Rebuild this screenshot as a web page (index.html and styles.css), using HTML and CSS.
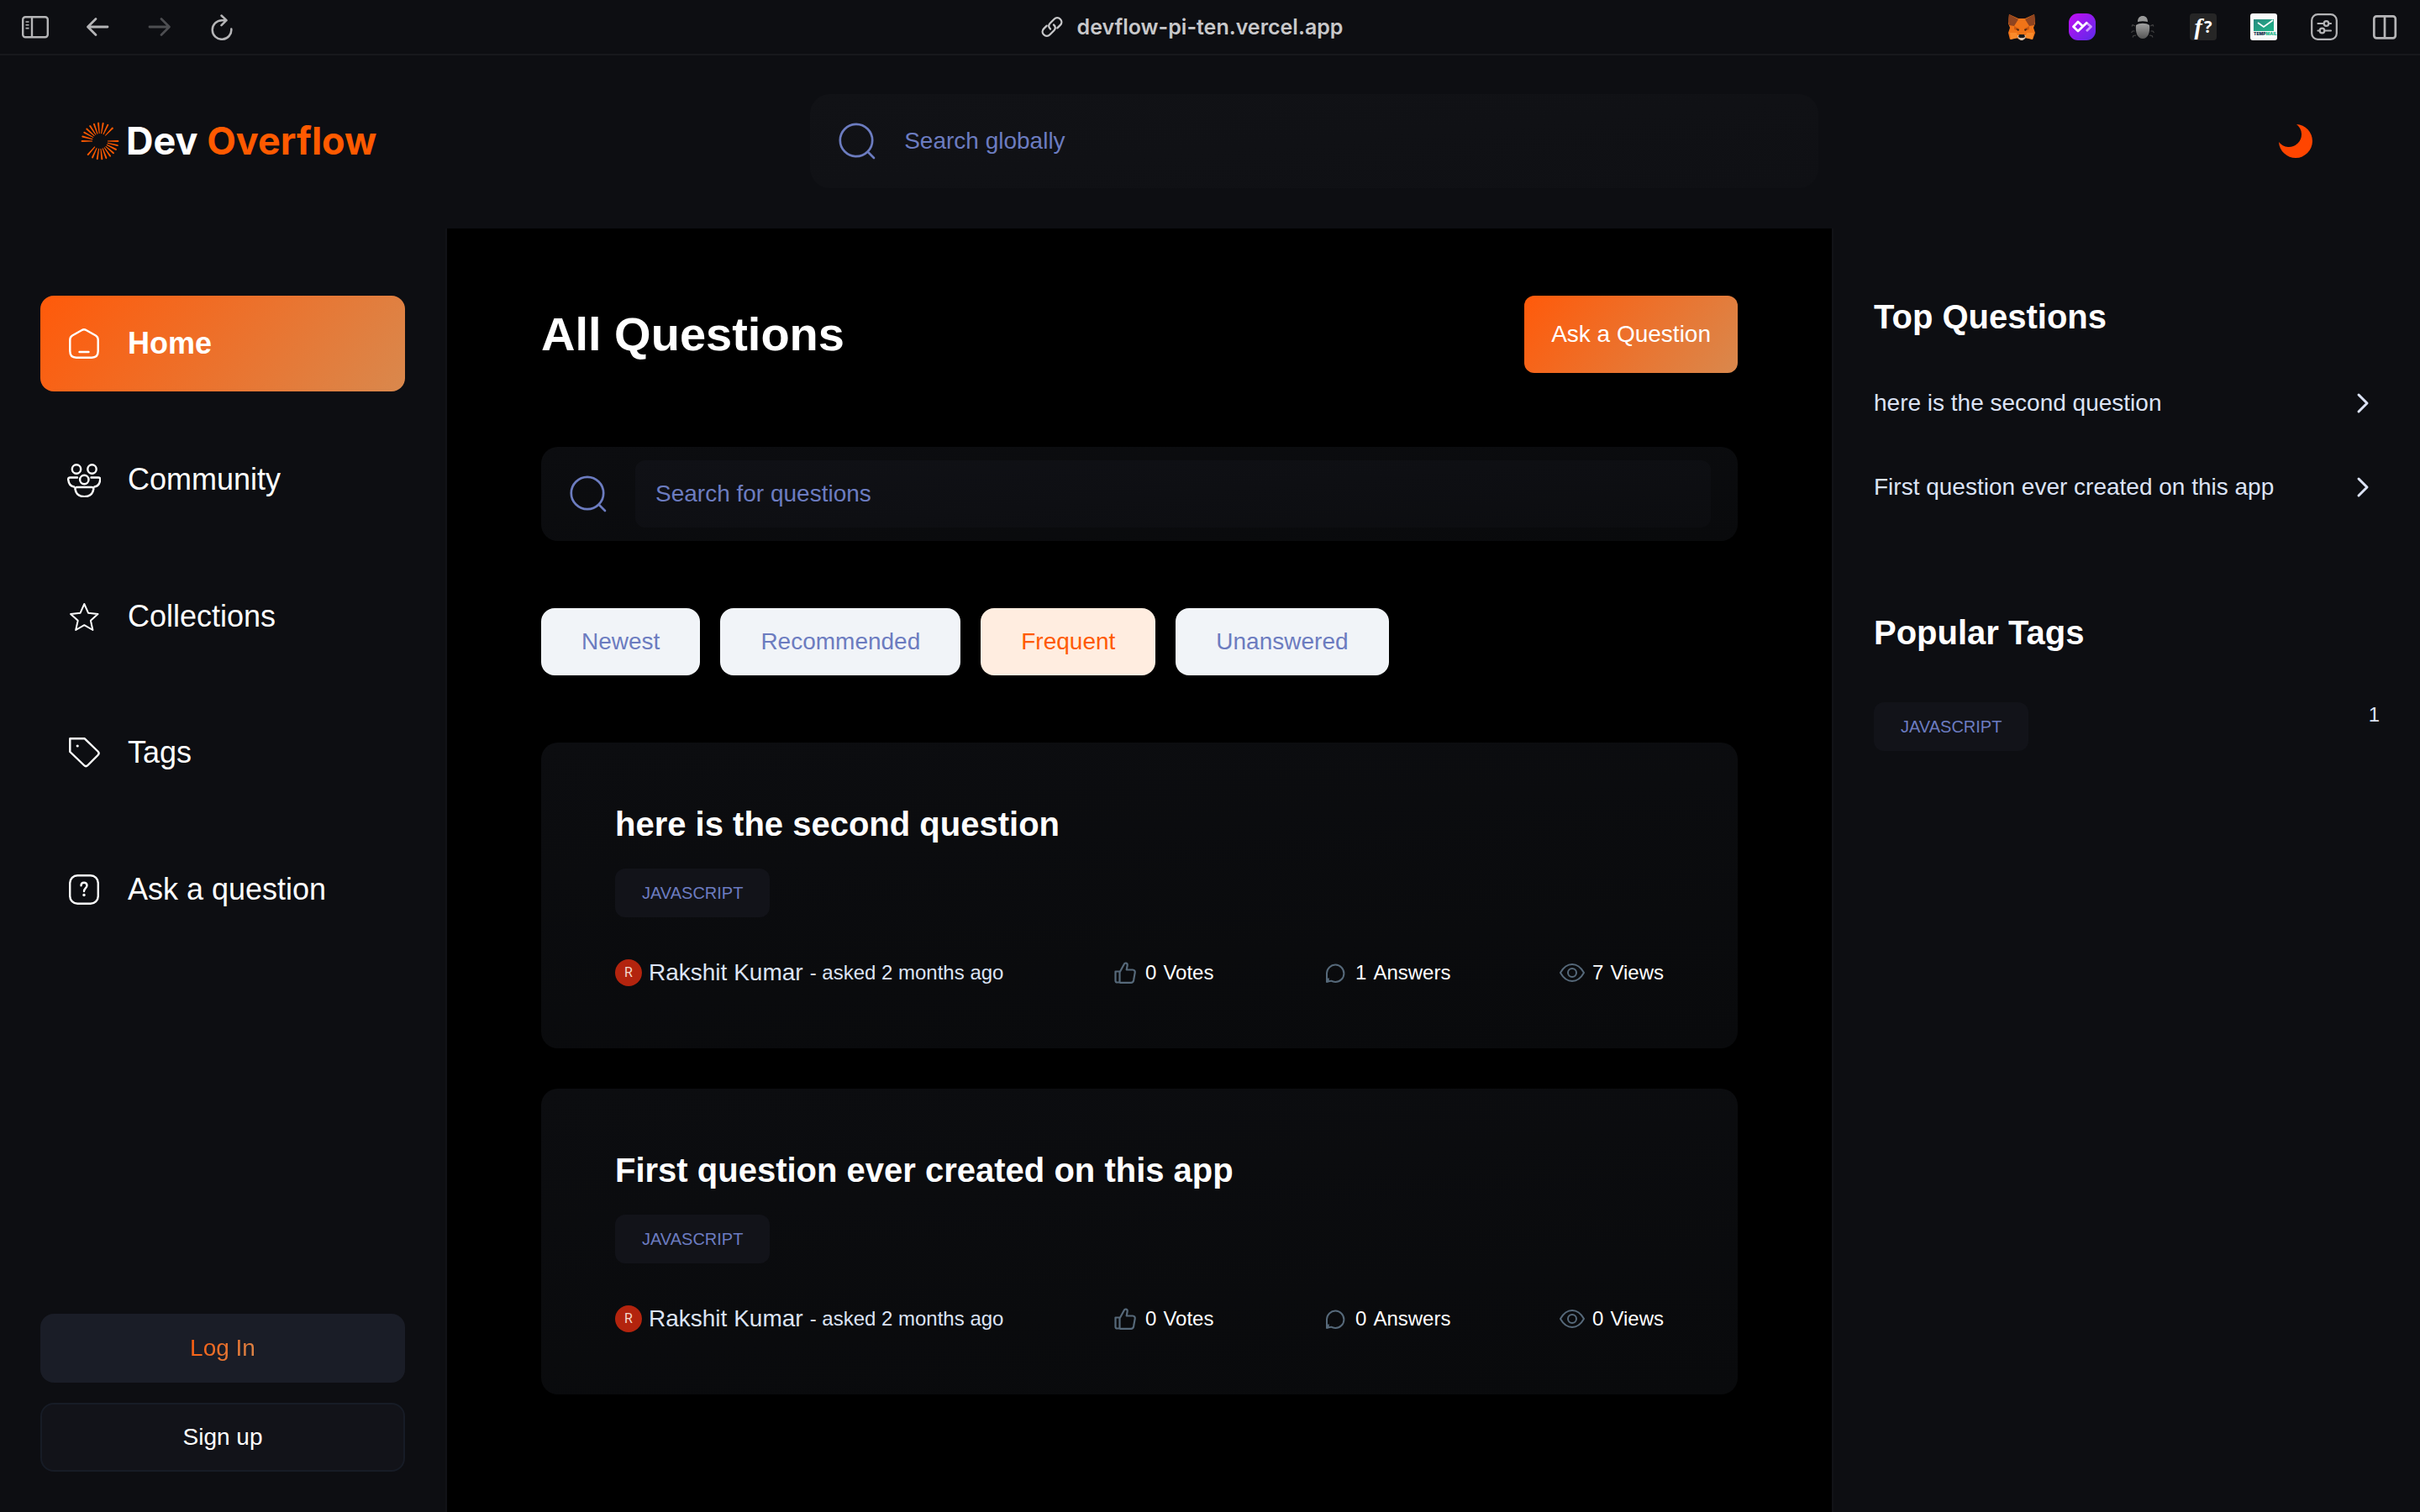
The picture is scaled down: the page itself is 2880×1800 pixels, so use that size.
FILE: index.html
```html
<!DOCTYPE html>
<html lang="en">
<head>
<meta charset="utf-8">
<meta name="viewport" content="width=device-width, initial-scale=1">
<title>Dev Overflow</title>
<link rel="stylesheet" href="styles.css">
</head>
<body>
<svg class="defs" aria-hidden="true">
  <defs>
    <linearGradient id="g-violet" x1="0" y1="0" x2="1" y2="1"><stop offset="0" stop-color="#c40df5"/><stop offset="1" stop-color="#5a2be8"/></linearGradient>
    <linearGradient id="g-bug" x1="0" y1="0" x2="0" y2="1"><stop offset="0" stop-color="#a2a2a2"/><stop offset="1" stop-color="#555"/></linearGradient>
    <linearGradient id="g-mail" x1="0" y1="0" x2="1" y2="1"><stop offset="0" stop-color="#2a8a80"/><stop offset="1" stop-color="#1fb488"/></linearGradient>
    <path id="ray" d="M9 -.5 L21.500 -1.100 Q23.500 0 21.500 .9 L9 .5Z"/>
  </defs>
  <symbol id="i-search" viewBox="0 0 48 48"><g fill="none" stroke="currentColor" stroke-width="2.700" stroke-linecap="round"><circle cx="23" cy="23" r="19.200"/><path d="M37 37l7 7"/></g></symbol>
  <symbol id="i-like" viewBox="0 0 32 32"><path d="M4.500 14.500h5v13h-3a2 2 0 0 1-2-2v-11zM9.500 15.500l5.500-10c.6-1.500 4-1.500 3.700 1.500L17.700 12.500h7.300c2.200 0 3 1.700 2.700 3.400l-1.600 9c-.4 1.900-1.400 2.900-3 2.900H9.500" fill="none" stroke="currentColor" stroke-width="2.200" stroke-linejoin="round"/></symbol>
  <symbol id="i-message" viewBox="0 0 32 32"><path d="M6 27V16.500A10.200 10.200 0 1 1 16.200 27c-2 0-3.500-.4-5-1.300C9.500 25.500 7.500 27 6 27zM6 27c1.500-1 2-3 1.700-4.500" fill="none" stroke="currentColor" stroke-width="2" stroke-linejoin="round"/></symbol>
  <symbol id="i-eye" viewBox="0 0 32 32"><g fill="none" stroke="currentColor" stroke-width="2"><path d="M2 16c3.500-6.300 8.300-10 14-10s10.500 3.700 14 10c-3.500 6.300-8.300 10-14 10S5.500 22.300 2 16z" stroke-linejoin="round"/><circle cx="16" cy="16" r="5"/></g></symbol>
  <symbol id="i-chevron" viewBox="0 0 40 40"><path d="M15 30l10-10-10-10" fill="none" stroke="currentColor" stroke-width="3" stroke-linecap="round" stroke-linejoin="round"/></symbol>
</svg>

<div class="toolbar">
  <div class="toolbar-group toolbar-left">
    <button class="tool" aria-label="Show sidebar"><svg viewBox="0 0 32 32"><g fill="none" stroke="currentColor" stroke-width="2.400"><rect x="1.200" y="4.200" width="29.600" height="24" rx="3"/><path d="M12 4v24"/></g><path d="M4.500 10h4M4.500 13.800h4M4.500 17.600h4" stroke="currentColor" stroke-width="1.600"/></svg></button>
    <button class="tool" aria-label="Back"><svg viewBox="0 0 32 32"><path d="M28 16H5M14 6.500L4.500 16l9.500 9.500" fill="none" stroke="currentColor" stroke-width="2.800" stroke-linecap="round" stroke-linejoin="round"/></svg></button>
    <button class="tool tool-disabled" aria-label="Forward" disabled><svg viewBox="0 0 32 32"><path d="M4 16h23M18 6.500l9.500 9.500-9.500 9.500" fill="none" stroke="currentColor" stroke-width="2.800" stroke-linecap="round" stroke-linejoin="round"/></svg></button>
    <button class="tool" aria-label="Reload"><svg viewBox="0 0 32 32"><path d="M27.300 18.500A11.300 11.300 0 1 1 16 8.200h5.500M15.500 2.500l6 5.700-6 6" fill="none" stroke="currentColor" stroke-width="2.500" stroke-linecap="round" stroke-linejoin="round"/></svg></button>
  </div>
  <div class="address">
    <svg class="icon-link" viewBox="0 0 28 28"><g fill="none" stroke="currentColor" stroke-width="2.300" stroke-linecap="round"><path d="M12 16.500c-2.500-2-2.300-4.800-.4-6.800l5-5c2.100-2.100 5.100-2.100 7.200 0s2.100 5.100 0 7.200l-3.500 3.500"/><path d="M16 11.500c2.500 2 2.300 4.800.4 6.800l-5 5c-2.100 2.100-5.100 2.100-7.200 0s-2.100-5.100 0-7.200l3.500-3.500"/></g></svg>
    <span>devflow-pi-ten.vercel.app</span>
  </div>
  <div class="toolbar-group toolbar-right">
    <button class="tool" aria-label="Wallet"><svg viewBox="0 0 32 32"><path fill="#f07418" d="M1 1l11 5h8l11-5 1 11-2 5 2 6-3 8-8-2-4 2.500h-3L10 29l-8 2-2-8 2-6-2-5z"/><path fill="#8f4420" d="M1 1l11 6-5 8-6-1L0 9zM31 1L20 7l5 8 6-1 1-5z"/><path fill="#fa8a2a" d="M2 23h8l2 6-9 2zM30 23h-8l-2 6 9 2z"/><path fill="#cf5a10" d="M7 15l6 3-1 3-5-2zM25 15l-6 3 1 3 5-2z"/><path fill="#3b2414" d="M9 18l4 1-1 2zM23 18l-4 1 1 2z"/><path fill="#d9c3b0" d="M11 26h10l-1 4-3 2h-2l-3-2z"/><path fill="#1b1b1b" d="M13 25h6l1 3-2 1h-4l-2-1z"/></svg></button>
    <button class="tool" aria-label="Code extension"><svg viewBox="0 0 32 32"><rect width="32" height="32" rx="11" fill="url(#g-violet)"/><g fill="none" stroke-width="2.800" stroke-linejoin="round"><path d="M21 11l5.500 4.800L21 21" stroke="#cf9bff"/><path d="M17 15.500l-6-5.500-5.500 5.800L11 21 22 10.500" stroke="#fff"/></g></svg></button>
    <button class="tool" aria-label="Bug tracker"><svg viewBox="0 0 32 32"><path d="M10 10c0-4.500 2.500-7 6-7s6 2.500 6 7c-4-1-8-1-12 0z" fill="#999"/><path d="M8 14c4-3 12-3 16 0 1 9-2 16-8 16S7 23 8 14z" fill="url(#g-bug)"/><path d="M7 15l-3-1.500-1 2M6.500 21H4l-1.500 2M8 26l-3 .5-1 2M25 15l3-1.500 1 2M25.500 21H28l1.500 2M24 26l3 .5 1 2" fill="none" stroke="#444" stroke-width="1.200"/></svg></button>
    <button class="tool tool-fn" aria-label="What font"><i>f</i><span>?</span></button>
    <button class="tool" aria-label="Temp mail"><svg viewBox="0 0 32 32"><rect width="32" height="32" rx="3" fill="#fafafa"/><rect x="4" y="7" width="24" height="14" fill="url(#g-mail)"/><path d="M9 11l7 5 11-8" fill="none" stroke="#fff" stroke-width="1.800"/><text x="4" y="26" font-family="Inter, sans-serif" font-size="5" font-weight="900" fill="#12324d">TEMP<tspan fill="#1fb488">MAIL</tspan></text></svg></button>
    <button class="tool" aria-label="Page settings"><svg viewBox="0 0 32 32"><g fill="none" stroke="currentColor" stroke-width="2.200" stroke-linecap="round"><rect x="1.200" y="1.200" width="29.600" height="29.600" rx="7"/><path d="M8.500 12h7M21.500 12h2.500M8.500 20.500h2M16.500 20.500h7.500"/><circle cx="18.500" cy="12" r="2.800"/><circle cx="13.500" cy="20.500" r="2.800"/></g></svg></button>
    <button class="tool" aria-label="Split view"><svg viewBox="0 0 32 32"><g fill="none" stroke="currentColor" stroke-width="2.700"><rect x="3.300" y="3.300" width="25.500" height="26" rx="3"/><path d="M16 3v26"/></g></svg></button>
  </div>
</div>

<header class="navbar">
  <a class="brand" href="#">
    <svg class="brand-mark" viewBox="-23 -23 46 46" fill="#ff5a00">
      <use href="#ray" transform="rotate(180)"/><use href="#ray" transform="rotate(195)"/><use href="#ray" transform="rotate(209)"/><use href="#ray" transform="rotate(223)"/><use href="#ray" transform="rotate(237)"/><use href="#ray" transform="rotate(251)"/><use href="#ray" transform="rotate(265)"/><use href="#ray" transform="rotate(280)"/><use href="#ray" transform="rotate(296)"/><use href="#ray" transform="rotate(314)"/>
      <use href="#ray"/><use href="#ray" transform="rotate(14)"/><use href="#ray" transform="rotate(28)"/><use href="#ray" transform="rotate(42)"/><use href="#ray" transform="rotate(56)"/><use href="#ray" transform="rotate(70)"/><use href="#ray" transform="rotate(84)"/><use href="#ray" transform="rotate(99)"/><use href="#ray" transform="rotate(115)"/><use href="#ray" transform="rotate(132)"/>
    </svg>
    <span>Dev <span class="brand-accent">Overflow</span></span>
  </a>
  <label class="search search-global">
    <svg class="icon-search"><use href="#i-search"/></svg>
    <input type="text" placeholder="Search globally" aria-label="Search globally">
  </label>
  <button class="theme-toggle" aria-label="Toggle theme"><svg class="icon" viewBox="0 0 40 40"><path d="M21 0A20 20 0 1 1 0 21A15 15 0 1 0 21 0z" fill="#ff4500"/></svg></button>
</header>

<div class="layout">
  <aside class="sidebar">
    <nav class="menu" aria-label="Main">
      <a class="menu-item menu-item-active" href="#"><svg class="icon" viewBox="0 0 40 40"><g fill="none" stroke="currentColor" stroke-width="2.400" stroke-linecap="round" stroke-linejoin="round"><path d="M17.500 4L6 10.500c-1.800 1.200-2.700 2.700-2.700 5V29c0 5 3 7.700 7.500 7.700h18.400c4.500 0 7.500-2.700 7.500-7.700V15.500c0-2.300-.9-3.800-2.700-5L22.500 4c-1.800-1-3.200-1-5 0z"/><path d="M14.500 30h11"/></g></svg>Home</a>
      <a class="menu-item" href="#"><svg class="icon" viewBox="0 0 40 40"><g fill="none" stroke="currentColor" stroke-width="2.400" stroke-linecap="round" stroke-linejoin="round"><circle cx="11" cy="6.500" r="5.200"/><circle cx="29.500" cy="6.500" r="5.200"/><circle cx="20.300" cy="19" r="5.200"/><path d="M12 16.500H3.500C1.700 16.500 1 17.300 1.200 19c.6 5 3 8 6.800 8.500M28.500 16.500h8.500c1.800 0 2.500.8 2.300 2.500-.6 5-3 8-6.800 8.500M12 28h16.800c2 0 2.800 1 2.500 2.500-1 5.500-5 8.700-10.900 8.700s-9.900-3.200-10.900-8.700C9.200 29 10 28 12 28z"/></g></svg>Community</a>
      <a class="menu-item" href="#"><svg class="icon" viewBox="0 0 40 40"><path d="M20.300 5l4.700 10.700 11.500 1.200-8.600 7.800 2.500 11.300-10.100-5.800L10.200 36l2.500-11.300-8.600-7.800 11.500-1.200z" fill="none" stroke="currentColor" stroke-width="2" stroke-linejoin="round"/></svg>Collections</a>
      <a class="menu-item" href="#"><svg class="icon" viewBox="0 0 40 40"><path d="M3.300 3.300h17.500L36.500 18.500c1.500 1.500 1.500 3 0 4.500l-12 12c-1.500 1.500-3 1.500-4.500 0L3.300 19z" fill="none" stroke="currentColor" stroke-width="2.400" stroke-linejoin="round"/><circle cx="12.200" cy="12" r="1.600" fill="currentColor"/></svg>Tags</a>
      <a class="menu-item" href="#"><svg class="icon" viewBox="0 0 40 40"><g fill="none" stroke="currentColor" stroke-width="2.400" stroke-linecap="round"><rect x="3.200" y="3.200" width="33.600" height="33.600" rx="9"/><path d="M16.500 15.200c0-4.600 7-4.600 7-.2 0 3.300-3.400 3.500-3.500 7"/></g><circle cx="20" cy="26.500" r="1.700" fill="currentColor"/></svg>Ask a question</a>
    </nav>
    <div class="auth">
      <a class="auth-button auth-login" href="#"><span>Log In</span></a>
      <a class="auth-button auth-signup" href="#">Sign up</a>
    </div>
  </aside>

  <main class="content">
    <div class="page-head">
      <h1>All Questions</h1>
      <button class="ask">Ask a Question</button>
    </div>
    <label class="search search-local">
      <svg class="icon-search"><use href="#i-search"/></svg>
      <input type="text" placeholder="Search for questions" aria-label="Search for questions">
    </label>
    <div class="filters">
      <button class="filter">Newest</button>
      <button class="filter">Recommended</button>
      <button class="filter filter-active">Frequent</button>
      <button class="filter">Unanswered</button>
    </div>
    <div class="questions">
      <article class="card">
        <h2><a href="#">here is the second question</a></h2>
        <a class="tag" href="#">JAVASCRIPT</a>
        <div class="meta">
          <a class="author" href="#"><span class="avatar">R</span><span class="author-name">Rakshit Kumar</span><span class="asked">- asked 2 months ago</span></a>
          <span class="stat"><svg class="icon-stat"><use href="#i-like"/></svg><span>0</span><span>Votes</span></span>
          <span class="stat"><svg class="icon-stat"><use href="#i-message"/></svg><span>1</span><span>Answers</span></span>
          <span class="stat"><svg class="icon-stat"><use href="#i-eye"/></svg><span>7</span><span>Views</span></span>
        </div>
      </article>
      <article class="card">
        <h2><a href="#">First question ever created on this app</a></h2>
        <a class="tag" href="#">JAVASCRIPT</a>
        <div class="meta">
          <a class="author" href="#"><span class="avatar">R</span><span class="author-name">Rakshit Kumar</span><span class="asked">- asked 2 months ago</span></a>
          <span class="stat"><svg class="icon-stat"><use href="#i-like"/></svg><span>0</span><span>Votes</span></span>
          <span class="stat"><svg class="icon-stat"><use href="#i-message"/></svg><span>0</span><span>Answers</span></span>
          <span class="stat"><svg class="icon-stat"><use href="#i-eye"/></svg><span>0</span><span>Views</span></span>
        </div>
      </article>
    </div>
  </main>

  <aside class="panel">
    <section>
      <h2>Top Questions</h2>
      <div class="top-list">
        <a class="top-item" href="#">here is the second question<svg class="icon"><use href="#i-chevron"/></svg></a>
        <a class="top-item" href="#">First question ever created on this app<svg class="icon"><use href="#i-chevron"/></svg></a>
      </div>
    </section>
    <section>
      <h2>Popular Tags</h2>
      <a class="popular-tag" href="#"><span class="tag">JAVASCRIPT</span><span class="tag-count">1</span></a>
    </section>
  </aside>
</div>
</body>
</html>
```
FILE: styles.css
```css
:root {
  --bg: #0d0e12;
  --surface: #121319;
  --muted: #6c7cc0;
  --text: #ffffff;
  --soft: #dce3f5;
  --accent: #ff5a00;
  --accent-gradient: linear-gradient(129deg, #ff5a0a 0%, #d9884d 100%);
  --dark-gradient: linear-gradient(175deg, #0c0d10 0%, #090a0c 100%);
}

* { box-sizing: border-box; }

body {
  margin: 0;
  min-height: 100vh;
  display: flex;
  flex-direction: column;
  background: var(--bg);
  color: var(--text);
  font-family: "Liberation Sans", Arial, sans-serif;
  font-size: 28px;
}

a { color: inherit; text-decoration: none; }
h1, h2 { margin: 0; font-weight: 700; }
svg { display: block; flex: none; }
button, input { font: inherit; color: inherit; border: 0; padding: 0; background: none; }

.defs { position: absolute; width: 0; height: 0; }
.icon { width: 40px; height: 40px; }

/* browser toolbar */
.toolbar {
  display: grid;
  grid-template-columns: 1fr auto 1fr;
  align-items: center;
  height: 66px;
  padding: 0 26px;
  border-bottom: 2px solid #17181c;
  color: #b5b5b7;
}
.toolbar-group { display: flex; }
.toolbar-left { gap: 42px; }
.toolbar-right { gap: 40px; justify-content: flex-end; }
.tool { width: 32px; height: 32px; }
.tool svg { width: 32px; height: 32px; }
.tool-disabled { color: #4d4e51; }
.tool-fn {
  display: flex;
  align-items: center;
  justify-content: center;
  gap: 2px;
  border-radius: 4px;
  background: #262626;
  color: #fff;
  font: 700 28px/32px "Liberation Serif", serif;
}
.tool-fn span { font: 700 20px/32px "Open Sans", sans-serif; }
.address {
  display: flex;
  align-items: center;
  gap: 16px;
  padding-right: 44px;
  color: #c8c8ca;
  font: 600 25px/32px Inter, sans-serif;
}
.icon-link { width: 28px; height: 28px; }

/* site header */
.navbar {
  display: flex;
  align-items: center;
  justify-content: space-between;
  padding: 46px 96px 48px;
}
.brand {
  display: flex;
  align-items: center;
  gap: 8px;
  font: 700 45px/60px Inter, sans-serif;
  white-space: nowrap;
}
.brand-mark { width: 46px; height: 46px; }
.brand-accent { color: var(--accent); }
.theme-toggle { padding: 0 32px; }

.search {
  display: flex;
  align-items: center;
  height: 112px;
  padding: 0 32px;
}
.search input {
  flex: 1;
  min-width: 0;
  height: 80px;
  padding: 0 24px;
  border-radius: 12px;
  outline: 0;
}
.search input::placeholder { color: var(--muted); opacity: 1; }
.icon-search { width: 48px; height: 48px; color: var(--muted); }
.search-global {
  flex: 0 1 1200px;
  gap: 8px;
  border-radius: 24px;
  background: linear-gradient(175deg, #111216 0%, #0f1014 100%);
}
.search-local {
  gap: 32px;
  margin-top: 88px;
  border-radius: 20px;
  background: var(--dark-gradient);
}
.search-local input { background: linear-gradient(175deg, #101116 0%, #0c0d10 100%); }

/* page columns */
.layout {
  flex: 1;
  display: grid;
  grid-template-columns: 532px 1fr 700px;
}

.sidebar {
  display: flex;
  flex-direction: column;
  justify-content: space-between;
  padding: 80px 48px 48px;
  border-right: 2px solid #111217;
}
.menu { display: flex; flex-direction: column; gap: 48px; }
.menu-item {
  display: flex;
  align-items: center;
  gap: 32px;
  padding: 32px;
  border-radius: 16px;
  font-size: 36px;
  line-height: 1.4;
}
.menu-item-active { background: var(--accent-gradient); font-weight: 700; }
.auth { display: flex; flex-direction: column; gap: 24px; }
.auth-button {
  display: flex;
  align-items: center;
  justify-content: center;
  height: 82px;
  border-radius: 16px;
}
.auth-login { background: #1a1d27; }
.auth-login span {
  background: var(--accent-gradient);
  background-clip: text;
  color: transparent;
}
.auth-signup { background: var(--surface); border: 2px solid #171c26; }

/* question feed */
.content { padding: 80px 112px; background: #000; }
.page-head { display: flex; align-items: center; justify-content: space-between; }
h1 { font-size: 56px; line-height: 72px; }
.ask {
  height: 92px;
  padding: 0 32px;
  border-radius: 12px;
  background: var(--accent-gradient);
}
.filters { display: flex; gap: 24px; margin-top: 80px; }
.filter {
  height: 80px;
  padding: 0 48px;
  border-radius: 16px;
  background: #f1f4f8;
  color: var(--muted);
}
.filter-active { background: #ffede0; color: var(--accent); }
.questions { display: flex; flex-direction: column; gap: 48px; margin-top: 80px; }
.card {
  display: flex;
  flex-direction: column;
  align-items: flex-start;
  padding: 72px 88px;
  border-radius: 20px;
  background: var(--dark-gradient);
}
.card h2, .panel h2 { font-size: 40px; line-height: 50px; }
.tag {
  display: block;
  padding: 16px 32px;
  border-radius: 12px;
  background: var(--surface);
  color: var(--muted);
  font-size: 20px;
  line-height: 26px;
}
.card .tag { margin-top: 28px; }
.meta {
  align-self: stretch;
  display: flex;
  align-items: center;
  justify-content: space-between;
  height: 36px;
  margin-top: 48px;
  font-size: 24px;
}
.author, .stat { display: flex; align-items: center; gap: 8px; }
.author { color: var(--soft); }
.author-name { font-size: 28px; }
.avatar {
  width: 32px;
  height: 32px;
  border-radius: 50%;
  background: #b3240e;
  color: #f3d8cc;
  font: 400 16px/32px Roboto, sans-serif;
  text-align: center;
}
.icon-stat { width: 32px; height: 32px; color: #56697a; }

/* right column */
.panel {
  display: flex;
  flex-direction: column;
  gap: 128px;
  padding: 80px 48px;
  border-left: 2px solid #111217;
  color: var(--soft);
}
.panel h2 { color: var(--text); }
.top-list { display: flex; flex-direction: column; gap: 60px; margin-top: 58px; }
.top-item { display: flex; align-items: center; justify-content: space-between; }
.popular-tag { display: flex; justify-content: space-between; margin-top: 58px; }
.tag-count { font-size: 24px; line-height: 30px; }
```
